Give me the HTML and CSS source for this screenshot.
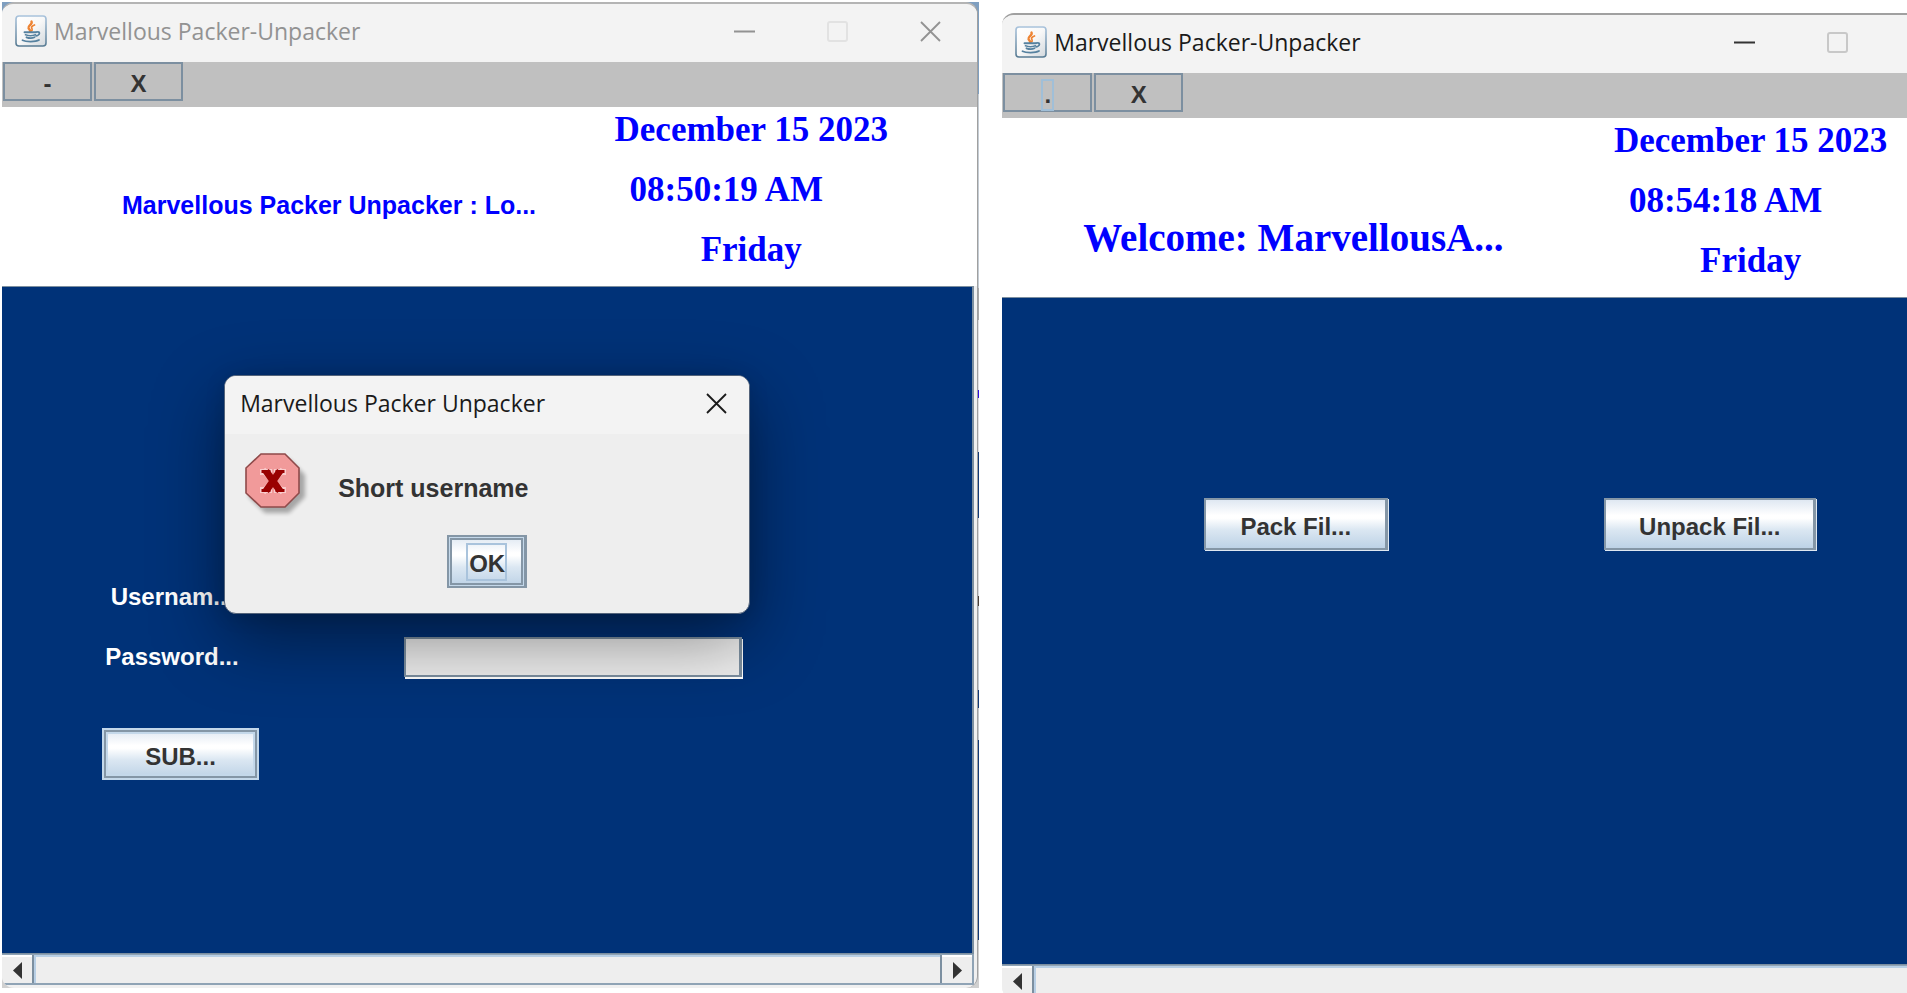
FILE: index.html
```html
<!DOCTYPE html>
<html lang="en">
<head>
<meta charset="utf-8">
<title>Marvellous Packer-Unpacker</title>
<link rel="stylesheet" href="styles.css">
</head>
<body>
<svg class="defs" aria-hidden="true">
  <defs>
    <linearGradient id="tile" x1="0" y1="0" x2="1" y2="1">
      <stop offset="0" stop-color="#ffffff"/><stop offset="0.5" stop-color="#f8f8f8"/><stop offset="1" stop-color="#d2d8dd"/>
    </linearGradient>
    <linearGradient id="rim" x1="0" y1="0" x2="0" y2="1">
      <stop offset="0" stop-color="#a9c3dc"/><stop offset="1" stop-color="#587b93"/>
    </linearGradient>
    <symbol id="java" viewBox="0 0 32 32">
      <rect x="1" y="1" width="30" height="30" rx="3" fill="url(#tile)" stroke="url(#rim)" stroke-width="1.6"/>
      <g fill="none" stroke="#ee8434" stroke-linecap="round">
        <path d="M16.5 6.500C18 9.500 12.500 10.500 13.500 13C14 14.300 15.200 14.600 15 16" stroke-width="2.400"/>
        <path d="M19.500 10C16.500 11.200 16 12.300 17 13.800C17.500 14.700 17 15.500 16.500 16" stroke-width="1.700"/>
      </g>
      <g fill="none" stroke="#56819f" stroke-linecap="round">
        <path d="M9.500 17.200H21" stroke-width="1.900"/>
        <path d="M10.500 19.800C13 20.800 18 20.800 20.500 19.800" stroke-width="1.700"/>
        <path d="M11.500 22.300C14 23.300 17.500 23.300 19.500 22.300" stroke-width="1.800"/>
        <path d="M21.500 17C25.500 16.200 25.500 19.800 21 21" stroke-width="1.700"/>
        <path d="M7.500 25.200C11 27 20.500 27 24 25" stroke-width="1.800"/>
      </g>
    </symbol>
    <symbol id="min" viewBox="0 0 21 21"><path d="M0 10.500H21" fill="none" stroke="currentColor" stroke-width="2"/></symbol>
    <symbol id="max" viewBox="0 0 21 21"><rect x="1" y="1" width="19" height="19" rx="2" fill="none" stroke="currentColor" stroke-width="2"/></symbol>
    <symbol id="close" viewBox="0 0 21 21"><path d="M1 1L20 20M20 1L1 20" fill="none" stroke="currentColor" stroke-width="1.800"/></symbol>
    <symbol id="left" viewBox="0 0 9 17"><path d="M9 0V17L0 8.500Z" fill="#333"/></symbol>
    <symbol id="right" viewBox="0 0 9 17"><path d="M0 0V17L9 8.500Z" fill="#333"/></symbol>
  </defs>
</svg>

<div class="desktop">
  <section class="window inactive" aria-label="Login window">
    <header class="titlebar">
      <svg class="app-icon"><use href="#java"/></svg>
      <span class="title">Marvellous Packer-Unpacker</span>
      <div class="controls">
        <button type="button" aria-label="Minimize"><svg><use href="#min"/></svg></button>
        <button type="button" class="off" aria-label="Maximize"><svg><use href="#max"/></svg></button>
        <button type="button" aria-label="Close"><svg><use href="#close"/></svg></button>
      </div>
    </header>
    <div class="toolbar">
      <button type="button">-</button>
      <button type="button">X</button>
    </div>
    <div class="banner">
      <h1 class="heading">Marvellous Packer Unpacker : Lo...</h1>
      <div class="clock">
        <span>December 15 2023</span>
        <span class="time">08:50:19 AM</span>
        <span>Friday</span>
      </div>
    </div>
    <div class="frame">
      <div class="content">
        <form class="login">
          <label for="user">Usernam...</label>
          <input id="user" type="text">
          <label for="pass">Password...</label>
          <input id="pass" type="password">
          <button type="button" class="metal submit">SUB...</button>
        </form>
        <div class="dialog" role="dialog" aria-labelledby="dialog-title">
          <header class="dialog-bar">
            <span id="dialog-title" class="title">Marvellous Packer Unpacker</span>
            <button type="button" aria-label="Close dialog"><svg><use href="#close"/></svg></button>
          </header>
          <div class="dialog-body">
            <div class="message">
              <svg class="error-icon" viewBox="0 0 64 64" aria-hidden="true">
                <path class="error-shadow" d="M20 6H44L60 22V44L44 60H20L4 44V22Z"/>
                <path d="M16 1H40L54 15V40L40 54H16L1 40V15Z" fill="#f19a9a" stroke="#8f4a4a" stroke-width="1.600"/>
                <g fill="none" stroke-linecap="square">
                  <path d="M20 19L36 37M36 19L20 37M18 19H24M32 19H38M18 37H24M32 37H38" stroke="#f9cccc" stroke-width="6"/>
                  <path d="M21 18L35 38M35 18L21 38" stroke="#990000" stroke-width="7" stroke-linecap="butt"/>
                  <path d="M18 18.500H24M32 18.500H38M18 37.500H24M32 37.500H38" stroke="#990000" stroke-width="3"/>
                </g>
              </svg>
              <span>Short username</span>
            </div>
            <button type="button" class="metal ok"><span>OK</span></button>
          </div>
        </div>
      </div>
      <div class="scrollbar">
        <button type="button" aria-label="Scroll left"><svg><use href="#left"/></svg></button>
        <div class="track"></div>
        <button type="button" aria-label="Scroll right"><svg><use href="#right"/></svg></button>
      </div>
    </div>
  </section>
</div>

<section class="window second" aria-label="Main window">
  <header class="titlebar">
    <svg class="app-icon"><use href="#java"/></svg>
    <span class="title">Marvellous Packer-Unpacker</span>
    <div class="controls">
      <button type="button" aria-label="Minimize"><svg><use href="#min"/></svg></button>
      <button type="button" class="off" aria-label="Maximize"><svg><use href="#max"/></svg></button>
      <button type="button" aria-label="Close"><svg><use href="#close"/></svg></button>
    </div>
  </header>
  <div class="toolbar">
    <button type="button"><span class="focus">.</span></button>
    <button type="button">X</button>
  </div>
  <div class="banner">
    <h1 class="heading welcome">Welcome: MarvellousA...</h1>
    <div class="clock">
      <span>December 15 2023</span>
      <span class="time">08:54:18 AM</span>
      <span>Friday</span>
    </div>
  </div>
  <div class="frame">
    <div class="content actions">
      <button type="button" class="metal pack">Pack Fil...</button>
      <button type="button" class="metal unpack">Unpack Fil...</button>
    </div>
    <div class="scrollbar">
      <button type="button" aria-label="Scroll left"><svg><use href="#left"/></svg></button>
      <div class="track"></div>
      <button type="button" aria-label="Scroll right"><svg><use href="#right"/></svg></button>
    </div>
  </div>
</section>
</body>
</html>
```
FILE: styles.css
```css
* { box-sizing: border-box; }

body {
  margin: 0;
  height: 100vh;
  overflow: hidden;
  display: flex;
  align-items: flex-start;
  gap: 23px;
  padding: 2px 0 0 2px;
  background: #fff;
  color: #333;
  font-family: "Liberation Sans", Arial, sans-serif;
  font-size: 24px;
  font-weight: bold;
}

button {
  border: 0;
  padding: 0;
  background: none;
  color: inherit;
  font: inherit;
}

svg { display: block; }

.defs { position: absolute; width: 0; height: 0; }

/* What shows of the desktop behind the first window */
.desktop {
  flex: 0 0 51.3%;
  padding-right: 1px;
  background: linear-gradient(#7f9fc0 0 92px, #c4ccd4 92px 286px, #a8a8a8 286px 318px,
    #e0e0e4 318px 388px, #3010e0 388px 396px, #e0e0e4 396px 450px, #123a78 450px 516px,
    #d8dade 516px 594px, #4a4038 594px 604px, #c4ccd4 604px 688px, #123a78 688px 706px,
    #c4c8cc 706px 738px, #123a78 738px 938px, #d0d0d0 938px);
}

.window {
  height: calc(100vh - 7px);
  display: flex;
  flex-direction: column;
  overflow: hidden;
  border-top: 2px solid #b4b4b4;
  border-right: 1px solid #a0a0a0;
  border-radius: 12px;
  background: #f0f0f0;
}

.second {
  flex: 0 0 51.2%;
  margin-top: 11px;
  border-top-color: #a0a0a0;
}

.titlebar {
  flex: none;
  height: 58px;
  display: flex;
  align-items: center;
  gap: 7px;
  padding: 0 36px 4px 13px;
  background: #f3f3f3;
}

.app-icon { width: 32px; height: 32px; }

.title {
  font-family: "Open Sans", "Noto Sans", sans-serif;
  font-size: 23px;
  font-weight: normal;
  color: #1a1a1a;
}

.controls {
  display: flex;
  gap: 72px;
  margin-left: auto;
  color: #333;
}

.controls svg, .dialog-bar svg { width: 21px; height: 21px; }
.controls .off { color: #c8c8c8; }
.inactive .titlebar .title { color: #929292; }
.inactive .controls { color: #929292; }
.inactive .controls .off { color: #e2e2e2; }

.toolbar {
  flex: none;
  height: 45px;
  display: flex;
  align-items: flex-start;
  gap: 2px;
  padding-left: 1px;
  background: #c0c0c0;
}

.toolbar button {
  width: 89px;
  height: 39px;
  padding-top: 4px;
  border: 2px solid #7c8fa0;
}

.focus {
  display: inline-block;
  padding: 0 1px;
  border: 2px solid #a0bfd8;
}

.banner {
  flex: none;
  height: 179px;
  display: flex;
  justify-content: space-between;
  padding-right: 76px;
  background: #fff;
  color: #00f;
}

.heading {
  margin: 0;
  padding: 84px 0 0 120px;
  font-size: 25px;
  line-height: 28px;
}

.welcome {
  padding: 100px 0 0 81px;
  font-family: "Liberation Serif", "Times New Roman", serif;
  font-size: 39px;
  line-height: 40px;
}

.clock {
  width: 300px;
  display: flex;
  flex-direction: column;
  text-align: center;
  font-family: "Liberation Serif", "Times New Roman", serif;
  font-size: 35px;
  line-height: 60px;
  white-space: nowrap;
  margin-top: -7px;
}

.time { padding-right: 50px; }

.frame {
  flex: 1;
  min-height: 0;
  display: flex;
  flex-direction: column;
  padding: 0 3px 3px 0;
}

.content {
  position: relative;
  flex: 1;
  min-height: 0;
  border: solid #7c8fa0;
  border-width: 1px 2px 1px 0;
  background: #003278;
}

.login {
  display: grid;
  grid-template-columns: 140px 338px;
  column-gap: 162px;
  grid-template-rows: 60px 60px 93px;
  padding: 280px 0 0 100px;
  color: #fff;
}

.login label {
  text-align: center;
  line-height: 60px;
}

.login input {
  height: 40px;
  align-self: center;
  padding: 0 6px;
  border: 2px solid #7c8fa0;
  border-right-width: 3px;
  outline: 0;
  background: #eee;
  box-shadow: 1px 2px 0 #fff;
  font: inherit;
}

.login #user { align-self: start; }

.metal {
  height: 52px;
  padding-top: 5px;
  border: 2px solid #8496a6;
  border-right-width: 3px;
  background: linear-gradient(#dfe8f2, #fff 32%, #fff 38%, #dbe7f2 62%, #bdd2e6);
  color: #333;
}

.submit {
  width: 157px;
  align-self: end;
  border: 2px solid #c4d8ea;
  box-shadow: inset 0 0 0 2px #8496a6, inset 0 0 0 4px #c4d8ea;
}

.dialog {
  position: absolute;
  top: 88px;
  left: 50%;
  width: 526px;
  transform: translateX(-50%);
  border: 1px solid #53637a;
  border-radius: 12px;
  overflow: hidden;
  background: #eee;
  box-shadow: 0 24px 72px rgba(0, 0, 0, 0.45), 0 2px 20px rgba(0, 0, 0, 0.12);
}

.dialog-bar {
  height: 58px;
  display: flex;
  align-items: center;
  justify-content: space-between;
  padding: 0 22px 4px 15px;
  background: #f3f3f3;
  color: #1a1a1a;
}

.dialog-body {
  display: flex;
  flex-direction: column;
  align-items: center;
  gap: 18px;
  padding: 19px 20px 25px;
}

.message {
  align-self: stretch;
  display: flex;
  align-items: center;
  gap: 29px;
  font-size: 25px;
}

.message span { padding-top: 6px; }

.error-icon { width: 64px; height: 64px; }
.error-shadow { fill: #000; opacity: 0.3; filter: blur(2px); }

.ok {
  width: 80px;
  height: 53px;
  padding: 0;
  border-color: #8496a6;
  box-shadow: inset 0 0 0 1px #c4d8ea, inset 0 0 0 3px #8496a6;
}

.ok span {
  display: inline-block;
  padding: 5px 0 1px 1px;
  border: 2px solid #a9c3dc;
}

.actions {
  display: flex;
  align-items: flex-start;
  gap: 216px;
  padding: 200px 0 0 202px;
}

.actions .metal { box-shadow: 1px 1px 0 #dfe8f2; }
.pack { width: 184px; }
.unpack { width: 212px; }

.scrollbar {
  flex: none;
  height: 31px;
  display: flex;
  border: solid #8fa3b5;
  border-width: 1px 2px 2px 0;
  background: #eee;
}

.scrollbar button {
  width: 30px;
  display: flex;
  align-items: center;
  justify-content: center;
  border-top: 2px solid #fff;
}

.scrollbar svg { width: 9px; height: 17px; }

.track {
  flex: 1;
  border: 2px solid #7c8fa0;
  border-width: 0 2px;
  box-shadow: inset 2px 2px 0 #b8cfe5;
}
```
